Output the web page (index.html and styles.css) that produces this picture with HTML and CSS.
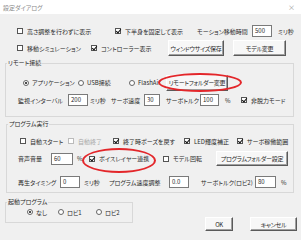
FILE: index.html
```html
<!DOCTYPE html>
<html>
<head>
    <title>設定ダイアログ</title>
    <link rel="stylesheet" href="styles.css">
</head>
<body>
    <div class="titlebar">
        <span class="title">設定ダイアログ</span>
        <span class="close">×</span>
    </div>
    <div class="dialog">
        <div class="row r-top1">
            <label class="item w98"><span class="cb"></span>高さ調整を行わずに表示</label>
            <label class="item w82"><span class="cb on"></span>下半身を固定して表示</label>
            <span class="w55">モーション移動時間</span>
            <span class="input w20">500</span>
            <span class="ml6">ミリ秒</span>
        </div>
        <div class="row r-top2">
            <label class="item w74"><span class="cb"></span>移動シミュレーション</label>
            <label class="item w77"><span class="cb on"></span>コントローラー表示</label>
            <button class="btn w56">ウィンドウサイズ保存</button>
            <button class="btn w53 ml9">モデル変更</button>
        </div>

        <fieldset class="group g-remote">
            <legend>リモート接続</legend>
            <div class="row r-radio">
                <label class="item w55"><span class="rd on"></span>アプリケーション</label>
                <label class="item w51"><span class="rd"></span>USB接続</label>
                <label class="item w37"><span class="rd"></span>FlashAir</label>
                <button class="btn w62">リモートフォルダー変更</button>
            </div>
            <div class="row r-watch">
                <span class="w50">監視インターバル</span>
                <span class="input w20">200</span>
                <span class="w23 pl2">ミリ秒</span>
                <span class="w33">サーボ速度</span>
                <span class="input w16">30</span>
                <span class="w34 ml6">サーボトルク</span>
                <span class="input w19">100</span>
                <span class="w22 pl6">%</span>
                <label class="item"><span class="cb on"></span>非脱力モード</label>
            </div>
        </fieldset>

        <fieldset class="group g-program">
            <legend>プログラム実行</legend>
            <div class="row r-check">
                <label class="item w48"><span class="cb"></span>自動スタート</label>
                <label class="item w45 disabled"><span class="cb"></span>自動終了</label>
                <label class="item w71"><span class="cb on"></span>終了時ポーズを戻す</label>
                <label class="item w53"><span class="cb on"></span>LED輝度補正</label>
                <label class="item"><span class="cb on"></span>サーボ稼働範囲</label>
            </div>
            <div class="row r-volume">
                <span class="w33">音声音量</span>
                <span class="input w22">60</span>
                <span class="w16 pl4">%</span>
                <label class="item w74"><span class="cb on"></span>ボイスレイヤー連携</label>
                <label class="item w53"><span class="cb"></span>モデル回転</label>
                <button class="btn w72">プログラムフォルダー設定</button>
            </div>
            <div class="row r-play">
                <span class="w42">再生タイミング</span>
                <span class="input w20">0</span>
                <span class="w29 pl4">ミリ秒</span>
                <span class="w60">プログラム速度調整</span>
                <span class="input w20">0.0</span>
                <span class="w54 ml12">サーボトルク(ロビ2)</span>
                <span class="input w21">80</span>
                <span class="pl5">%</span>
            </div>
        </fieldset>

        <div class="bottom">
            <fieldset class="group g-start">
                <legend>起動プログラム</legend>
                <div class="row r-start">
                    <label class="item w31"><span class="rd on"></span>なし</label>
                    <label class="item w38"><span class="rd"></span>ロビ1</label>
                    <label class="item"><span class="rd"></span>ロビ2</label>
                </div>
            </fieldset>
            <div class="actions">
                <button class="btn w28">OK</button>
                <button class="btn w47">キャンセル</button>
            </div>
        </div>

        <span class="mark mark-remote"></span>
        <span class="mark mark-voice"></span>
    </div>
</body>
</html>
```

FILE: styles.css
```css
* {
    box-sizing: border-box;
}

body {
    margin: 0;
    width: 301px;
    height: 240px;
    overflow: hidden;
    font-family: "Noto Sans CJK JP", "Noto Sans", sans-serif;
    font-size: 6px;
    font-feature-settings: "palt";
    color: #2a2a2a;
    background: #f0f0f0;
}

.titlebar {
    height: 14px;
    background: #fff;
    display: flex;
    align-items: center;
    justify-content: space-between;
    padding: 0 6px 0 3px;
}

.title {
    color: #8a8a8a;
    font-size: 6px;
}

.close {
    color: #999;
    font-size: 7px;
}

.dialog {
    position: relative;
    padding-top: 11px;
}

.row {
    display: flex;
    align-items: center;
    white-space: nowrap;
}

.r-top1 {
    height: 12px;
    padding-left: 17px;
}

.r-top2 {
    height: 16px;
    margin-top: 3px;
    padding-left: 17px;
}

.item {
    display: flex;
    align-items: center;
}

.disabled {
    color: #a8a8a8;
}

.cb {
    width: 6px;
    height: 6px;
    border: 1px solid #555;
    background: #fff;
    margin-right: 4px;
    position: relative;
    flex: none;
}

.cb.on::after {
    content: "";
    position: absolute;
    left: 1px;
    top: -1px;
    width: 2px;
    height: 4px;
    border-right: 1px solid #111;
    border-bottom: 1px solid #111;
    transform: rotate(40deg);
}

.disabled .cb {
    border-color: #bbb;
}

.rd {
    width: 6px;
    height: 6px;
    border: 1px solid #666;
    border-radius: 50%;
    background: #fff;
    margin-right: 3px;
    position: relative;
    flex: none;
}

.rd.on::after {
    content: "";
    position: absolute;
    left: 1px;
    top: 1px;
    width: 2px;
    height: 2px;
    border-radius: 50%;
    background: #111;
}

.input {
    height: 12px;
    background: #fff;
    border: 1px solid #7a7a7a;
    padding-left: 2px;
    line-height: 10px;
    flex: none;
}

.btn {
    height: 16px;
    font-family: inherit;
    font-size: 6px;
    font-feature-settings: "palt";
    letter-spacing: -0.3px;
    color: #2a2a2a;
    background: #f7f7f7;
    border: 1px solid;
    border-color: #fff #5a5a5a #5a5a5a #fff;
    box-shadow: inset -1px -1px #a0a0a0;
    padding: 0;
    flex: none;
}

.group {
    border: 1px solid #d8d8d8;
    padding: 0;
    min-inline-size: 0;
}

.group legend {
    font-size: 6px;
    line-height: 8px;
    padding: 0 1px;
    margin-left: 1px;
}

.g-remote {
    margin: 3px 0 0 5px;
    width: 289px;
    padding-bottom: 10px;
}

.r-radio {
    height: 15px;
    margin-top: 8px;
    padding-left: 17px;
}

.r-watch {
    height: 12px;
    margin-top: 4px;
    padding-left: 12px;
}

.g-program {
    margin: 3px 0 0 6px;
    width: 288px;
    padding-bottom: 4px;
}

.r-check {
    height: 10px;
    margin-top: 8px;
    padding-left: 13px;
}

.r-volume {
    height: 15px;
    margin-top: 5px;
    padding-left: 11px;
}

.r-volume .btn {
    height: 15px;
}

.r-play {
    height: 12px;
    margin-top: 10px;
    padding-left: 11px;
}

.bottom {
    display: flex;
    margin-top: 5px;
}

.g-start {
    margin: 0 0 0 5px;
    width: 128px;
    height: 25px;
}

.r-start {
    height: 8px;
    margin-top: 2px;
    padding-left: 21px;
}

.actions {
    display: flex;
    margin: 19px 0 0 72px;
    gap: 17px;
}

.actions .btn {
    height: 14px;
}

.mark {
    position: absolute;
    border: 2px solid #e3262a;
    border-radius: 50%;
}

.mark-remote {
    left: 158px;
    top: 59px;
    width: 84px;
    height: 19px;
}

.mark-voice {
    left: 82px;
    top: 134px;
    width: 74px;
    height: 25px;
}

.w16 { width: 16px; }
.w19 { width: 19px; }
.w20 { width: 20px; }
.w21 { width: 21px; }
.w22 { width: 22px; }
.w23 { width: 23px; }
.w28 { width: 28px; }
.w29 { width: 29px; }
.w31 { width: 31px; }
.w33 { width: 33px; }
.w34 { width: 34px; }
.w37 { width: 37px; }
.w38 { width: 38px; }
.w42 { width: 42px; }
.w45 { width: 45px; }
.w47 { width: 47px; }
.w48 { width: 48px; }
.w50 { width: 50px; }
.w51 { width: 51px; }
.w53 { width: 53px; }
.w54 { width: 54px; }
.w55 { width: 55px; }
.w56 { width: 56px; }
.w60 { width: 60px; }
.w62 { width: 62px; }
.w71 { width: 71px; }
.w72 { width: 72px; }
.w74 { width: 74px; }
.w77 { width: 77px; }
.w82 { width: 82px; }
.w98 { width: 98px; }

.ml6 { margin-left: 6px; }
.ml9 { margin-left: 9px; }
.ml12 { margin-left: 12px; }
.pl2 { padding-left: 2px; }
.pl4 { padding-left: 4px; }
.pl5 { padding-left: 5px; }
.pl6 { padding-left: 6px; }
```
